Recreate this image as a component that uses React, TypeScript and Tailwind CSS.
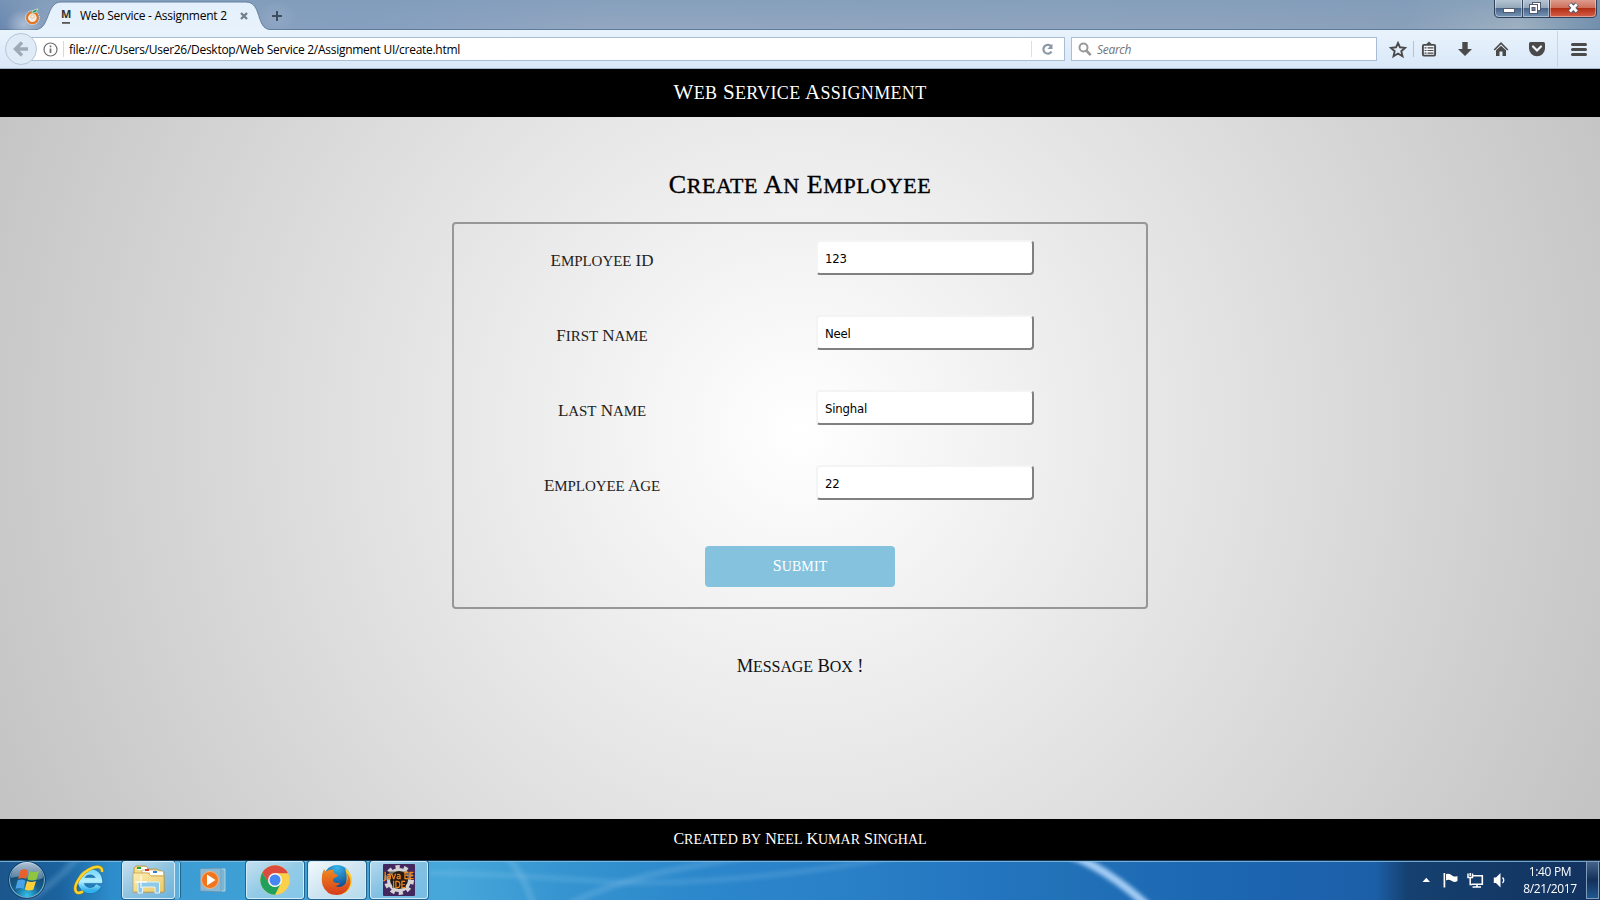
import React from "react";

function Caps({ text, className }: { text: string; className: string }) {
  const runs = text.match(/[a-z]+|[^a-z]+/g) ?? [];
  return (
    <span className={`whitespace-nowrap font-['Liberation_Serif',serif] ${className}`}>
      {runs.map((run, i) =>
        /[a-z]/.test(run) ? (
          <span key={i} className="text-[1.22em] leading-none [font-variant:small-caps]">{run}</span>
        ) : (
          <React.Fragment key={i}>{run}</React.Fragment>
        )
      )}
    </span>
  );
}

const UI = "font-['Open_Sans','Noto_Sans',sans-serif]";

function TabStrip() {
  return (
    <div className="relative flex h-[30px] shrink-0 items-stretch border-b border-[#5f7b9b] bg-[linear-gradient(90deg,#6a87b0_0,#8ea3bf_3%,#869fc0_22%,#93a7c1_38%,#8fa4be_75%,#8aa0ba_88%,#9fb1c1_95%,#708eac_100%)]">
      <div className="absolute inset-0 bg-gradient-to-b from-[#7d9bb9]/60 to-transparent" />
      <svg className="absolute left-0 top-0" width="300" height="30" viewBox="0 0 300 30">
        <defs>
          <linearGradient id="tab" x1="0" y1="0" x2="0" y2="1">
            <stop offset="0" stopColor="#e3f0fc" />
            <stop offset="1" stopColor="#e8f2fb" />
          </linearGradient>
          <radialGradient id="glow">
            <stop offset="0" stopColor="#dce4ee" stopOpacity=".5" />
            <stop offset="1" stopColor="#dce4ee" stopOpacity="0" />
          </radialGradient>
        </defs>
        <ellipse cx="24" cy="24" rx="18" ry="15" fill="url(#glow)" />
        <ellipse cx="277" cy="17" rx="20" ry="16" fill="url(#glow)" opacity=".25" />
        <path d="M36 29.5C50 29 46 2 61 2H246C262 2 256 29 270 29.5V31H36Z" fill="url(#tab)" />
        <path d="M36 29.5C50 29 46 2 61 2H246C262 2 256 29 270 29.5" fill="none" stroke="#65809f" />
        <circle cx="32.4" cy="17.6" r="7" fill="none" stroke="#f3f3ef" strokeDasharray="1 1" />
        <circle cx="32.4" cy="17.8" r="5.3" fill="#f0ede8" stroke="#ea7415" strokeWidth="2" />
        <circle cx="32.4" cy="16.6" r="1.8" fill="none" stroke="#f4b27a" strokeWidth=".8" />
        <path d="M32 13.5Q32 9.500 38 9Q37 13 32 13.500" fill="#1f9b50" stroke="#fff" strokeWidth=".6" />
        <path d="M62 22.900H70" stroke="#444" strokeWidth="1.600" />
        <path d="M241 13L247 19M247 13L241 19" stroke="#71818f" strokeWidth="2.400" />
        <path d="M277 11V21M272 16H282" stroke="#3f4e5e" strokeWidth="2" />
      </svg>
      <div className={`relative flex items-center pl-[61px] text-black ${UI}`}>
        <span className="w-[19px] pb-[2px] text-[11px] font-bold leading-none text-[#333]">M</span>
        <span className="whitespace-nowrap pt-[3px] text-[12px] tracking-[-0.26px]">Web Service - Assignment 2</span>
      </div>
      <svg className="absolute right-0 top-0" width="110" height="19" viewBox="1490 0 110 19">
        <defs>
          <linearGradient id="wb" x1="0" y1="0" x2="0" y2="1">
            <stop offset="0" stopColor="#b9c8d6" /><stop offset=".48" stopColor="#93a7bb" />
            <stop offset=".5" stopColor="#48668a" /><stop offset="1" stopColor="#7997b8" />
          </linearGradient>
          <linearGradient id="wc" x1="0" y1="0" x2="0" y2="1">
            <stop offset="0" stopColor="#dd9c8e" /><stop offset=".48" stopColor="#cd6d58" />
            <stop offset=".5" stopColor="#b32f14" /><stop offset="1" stopColor="#d5604a" />
          </linearGradient>
        </defs>
        <path d="M1494.500 -1V13Q1494.500 17.500 1499 17.500H1592Q1596.500 17.500 1596.500 13V-1Z" fill="url(#wb)" stroke="#2f4059" />
        <path d="M1550 0H1596V13Q1596 17 1592 17H1550Z" fill="url(#wc)" />
        <path d="M1495.500 0V13Q1495.500 16.500 1499 16.500H1521.500V0M1523.500 0V16.500H1548.500V0M1550.500 0V16.500H1592Q1595.500 16.500 1595.500 13V0" fill="none" stroke="#fff" strokeOpacity=".4" />
        <path d="M1522.500 0V17M1549.500 0V17" stroke="#34445c" />
        <rect x="1503.500" y="8.500" width="11" height="4" fill="#fff" stroke="#535a6b" />
        <rect x="1532.500" y="2.500" width="8" height="8" fill="#fff" stroke="#535a6b" />
        <rect x="1529.500" y="4.500" width="8" height="9" fill="#fff" stroke="#535a6b" />
        <rect x="1532" y="7.500" width="3" height="3" fill="#6f83a1" stroke="#535a6b" />
        <path d="M1569.800 4L1577 11.800M1577 4L1569.800 11.800" stroke="#535a6b" strokeWidth="4.800" />
        <path d="M1570 4.300L1576.800 11.500M1576.800 4.300L1570 11.500" stroke="#fff" strokeWidth="2.800" />
      </svg>
    </div>
  );
}

function NavBar() {
  return (
    <div className={`relative flex h-[39px] shrink-0 items-center border-b border-[#a3b5cb] bg-gradient-to-b from-[#e9f3fc] to-[#d9e7f8] ${UI}`}>
      <div className="ml-[30px] flex h-[24px] w-[1035px] items-center border border-[#a9bdd5] bg-white">
        <svg className="ml-[12px]" width="15" height="15" viewBox="0 0 15 15">
          <circle cx="7.500" cy="7.500" r="6.500" fill="none" stroke="#6e6e6e" strokeWidth="1.200" />
          <path d="M7.500 6.500V11M7.500 3.500V5.200" stroke="#6e6e6e" strokeWidth="1.700" />
        </svg>
        <div className="ml-[5px] h-[16px] w-px bg-[#d8d8d8]" />
        <span className="ml-[5px] whitespace-nowrap pt-[1px] text-[12px] tracking-[-0.28px] text-black">file:///C:/Users/User26/Desktop/Web Service 2/Assignment UI/create.html</span>
        <div className="ml-auto h-[16px] w-px bg-[#dcdfe3]" />
        <svg className="ml-[9px] mr-[10px]" width="13" height="13" viewBox="0 0 13 13">
          <path d="M10.300 3.600A4.400 4.400 0 1 0 10.600 8.500" fill="none" stroke="#8c9aa8" strokeWidth="2.200" />
          <path d="M11.500 .8V6H6.300Z" fill="#8c9aa8" />
        </svg>
      </div>
      <div className="ml-[6px] flex h-[24px] w-[306px] items-center border border-[#a9bdd5] bg-white pl-[6px]">
        <svg width="14" height="15" viewBox="0 0 14 15">
          <circle cx="5.500" cy="5.500" r="4" fill="none" stroke="#999" strokeWidth="2" />
          <path d="M8.300 8.500L12.700 13.200" stroke="#999" strokeWidth="2.600" />
        </svg>
        <span className="ml-[5px] pt-[1px] text-[12px] italic tracking-[-0.3px] text-[#70757a]">Search</span>
      </div>
      <svg className="absolute left-[4px] top-[2px]" width="34" height="34" viewBox="0 0 34 34">
        <circle cx="17" cy="17" r="15.500" fill="#dfebf7" stroke="#b5c6d8" />
        <path d="M24 17H12M18 10.500L11.500 17L18 23.500" fill="none" stroke="#a0aab4" strokeWidth="3.400" />
      </svg>
      <svg className="absolute left-[1384px] top-0" width="216" height="38" viewBox="1384 30 216 38">
        <path d="M1398 43L1400 47.300L1405 47.900L1401.300 51.200L1402.500 56.200L1398 53.500L1393.500 56.200L1394.700 51.200L1391 47.900L1396 47.300Z" fill="none" stroke="#4a4a4a" strokeWidth="1.900" />
        <path d="M1413.500 41V57" stroke="#b4c3d4" />
        <path d="M1557.500 31V67" stroke="#c6d6e8" />
        <rect x="1422.900" y="44.900" width="12.200" height="10.700" rx="1" fill="#f1f7fd" stroke="#4a4a4a" strokeWidth="1.900" />
        <path d="M1425 45L1427 43.500L1429 41.500L1431 43.500L1433 45Z" fill="#4a4a4a" />
        <path d="M1424.500 47.900H1426.500M1427.500 47.900H1433.500M1424.500 50.500H1426.500M1427.500 50.500H1433.500M1424.500 53.100H1426.500M1427.500 53.100H1433.500" stroke="#4a4a4a" strokeWidth="1.200" />
        <path d="M1462.300 42H1467.700V49H1472L1465 56L1458 49H1462.300Z" fill="#4a4a4a" />
        <path d="M1494.200 50L1501 43.200L1507.800 50" fill="none" stroke="#4a4a4a" strokeWidth="1.600" />
        <path d="M1496 50.300L1501 45.700L1506 50.300V56H1502.500V51.500H1499.500V56H1496Z" fill="#4a4a4a" />
        <path d="M1530.500 42H1543.500Q1545 42 1545 43.500V48.500A8 7.800 0 0 1 1529 48.500V43.500Q1529 42 1530.500 42Z" fill="#4a4a4a" />
        <path d="M1533 46.500L1537 50.500L1541 46.500" fill="none" stroke="#eef5fc" strokeWidth="2.200" strokeLinecap="round" />
        <path d="M1572.500 44.500H1585.500M1572.500 49.500H1585.500M1572.500 54.500H1585.500" stroke="#4a4a4a" strokeWidth="3" strokeLinecap="round" />
      </svg>
    </div>
  );
}

function Field({ label, value }: { label: string; value: string }) {
  return (
    <div className="flex h-[75px]">
      <div className="flex h-[42px] w-[296px] items-center justify-center">
        <Caps text={label} className="text-[17px] tracking-[-0.05px] text-[#222]" />
      </div>
      <input
        readOnly
        value={value}
        className="ml-[66px] h-[35px] w-[218px] rounded-[4px] border-2 border-b-[#808080] border-l-[#f4f4f4] border-r-[#808080] border-t-[#f4f4f4] bg-white px-[7px] pt-[2px] font-['DejaVu_Sans_Condensed','DejaVu_Sans',sans-serif] text-[13px] tracking-[-0.2px] text-black outline-none"
      />
    </div>
  );
}

function StartOrb() {
  return (
    <svg width="38" height="38" viewBox="0 0 38 38">
      <defs>
        <radialGradient id="orb" cx=".5" cy=".95" r=".9">
          <stop offset="0" stopColor="#35c3ee" /><stop offset=".4" stopColor="#14638f" /><stop offset="1" stopColor="#12395f" />
        </radialGradient>
        <linearGradient id="gloss" x1="0" y1="0" x2="0" y2="1">
          <stop offset="0" stopColor="#d5e0ec" stopOpacity=".85" /><stop offset="1" stopColor="#8fabc6" stopOpacity=".5" />
        </linearGradient>
      </defs>
      <circle cx="19" cy="19" r="17.500" fill="url(#orb)" stroke="#7fb3d3" strokeWidth="1.200" />
      <circle cx="19" cy="19" r="18.400" fill="none" stroke="#0d3557" strokeWidth=".8" />
      <path d="M3 17A16 16 0 0 1 35 17Q27 21 19 17Q11 14 3 17Z" fill="url(#gloss)" />
      <path d="M12.500 9.500Q16 7 20 9.500L18 18Q14 16 10 18Z" fill="#e8602c" />
      <path d="M21.500 10Q26 12 31 10L28.500 18.500Q24 20.500 19.500 18.500Z" fill="#8ec63f" />
      <path d="M9.500 19.500Q13.500 17.500 17.500 19.700L15.500 28Q11.500 26 7.500 28Z" fill="#4aa3e6" />
      <path d="M19 20Q23.500 22 28 20L25.500 28.500Q21 30.500 16.800 28.500Z" fill="#fbcf3a" />
    </svg>
  );
}

function IeIcon() {
  return (
    <svg width="34" height="34" viewBox="0 0 34 34">
      <defs>
        <linearGradient id="ie" x1="0" y1="0" x2="0" y2="1">
          <stop offset="0" stopColor="#7fdcfb" /><stop offset=".5" stopColor="#b5effe" /><stop offset="1" stopColor="#2fb0ec" />
        </linearGradient>
      </defs>
      <path d="M26.500 22.500A9.400 9.400 0 1 1 27.500 17.500H10.500" fill="none" stroke="#1c6fae" strokeWidth="7" />
      <path d="M26.500 22.500A9.400 9.400 0 1 1 27.500 17.500H10.500" fill="none" stroke="url(#ie)" strokeWidth="5.400" />
      <path d="M30 9C31 3 24 2 16 7C7 13 1 24 4 28.500C5 30.500 8 30 11 28.500" fill="none" stroke="#b98a12" strokeWidth="3.200" />
      <path d="M30 9C31 3 24 2 16 7C7 13 1 24 4 28.500C5 30.500 8 30 11 28.500" fill="none" stroke="#fbd62c" strokeWidth="2.200" />
    </svg>
  );
}

function ExplorerIcon() {
  return (
    <svg width="34" height="32" viewBox="0 0 34 32">
      <defs>
        <linearGradient id="fold" x1="0" y1="0" x2="1" y2="1">
          <stop offset="0" stopColor="#fbeeb4" /><stop offset="1" stopColor="#ecc964" />
        </linearGradient>
      </defs>
      <path d="M2 28V4L4 2H14L16 5H24L32 8V28Z" fill="#f3dc8c" stroke="#b58d3c" strokeWidth=".8" />
      <rect x="5" y="3" width="10" height="3" fill="#fff" /><rect x="5" y="3" width="4" height="2" fill="#25a52b" />
      <path d="M10 6H23V9H10Z" fill="#fff" stroke="#b58d3c" strokeWidth=".5" /><rect x="13" y="5" width="4" height="2" fill="#d13a25" />
      <path d="M18 7.500H31V11H18Z" fill="#fff" /><rect x="21" y="7" width="4" height="2" fill="#2b84d8" />
      <path d="M1 28V9H16L19 12H32V28Z" fill="url(#fold)" stroke="#c29c49" strokeWidth=".7" />
      <path d="M6 29V19Q6 18 7 18H26Q27.500 18 27.500 19V29H23V23H10.500V29Z" fill="#8fc9e8" stroke="#e1f3fc" />
      <path d="M9 12V24M3 18H15" stroke="#fff" strokeOpacity=".8" strokeWidth="1.400" />
    </svg>
  );
}

function MediaIcon() {
  return (
    <svg width="30" height="26" viewBox="0 0 30 26">
      <path d="M22 2H26V24H22Z" fill="#79b5d5" stroke="#c0dfee" strokeWidth=".8" />
      <path d="M1 1.500L22 1V25L1 24Z" fill="#8bb9d4" stroke="#5d93b3" strokeWidth=".8" />
      <circle cx="11" cy="13" r="8.500" fill="#f0751d" stroke="#f9b27a" />
      <path d="M8 7.500L16.500 13L8 18.500Z" fill="#fff" />
    </svg>
  );
}

function ChromeIcon() {
  return (
    <svg width="30" height="30" viewBox="0 0 30 30">
      <circle cx="15" cy="15" r="14.700" fill="#fbd14b" />
      <path d="M2.270 7.650A14.700 14.700 0 0 1 27.730 7.650L27.800 8.200H15V15L8.600 18.400Z" fill="#dd4b3e" />
      <path d="M2.270 7.650L8.900 18.500Q11 21.800 15 22L20.500 19L15 29.700A14.700 14.700 0 0 1 2.270 7.650Z" fill="#1fa15d" />
      <circle cx="15" cy="15" r="7" fill="#f4f6f8" />
      <circle cx="15" cy="15" r="5.500" fill="#4587f3" />
    </svg>
  );
}

function FirefoxIcon() {
  return (
    <svg width="32" height="32" viewBox="0 0 32 32">
      <defs>
        <radialGradient id="globe" cx=".5" cy=".1" r=".8">
          <stop offset="0" stopColor="#35b6ea" /><stop offset="1" stopColor="#0f3f87" />
        </radialGradient>
        <linearGradient id="fox" x1="0" y1="0" x2="0" y2="1">
          <stop offset="0" stopColor="#f08a1f" /><stop offset="1" stopColor="#d63c1c" />
        </linearGradient>
      </defs>
      <circle cx="16" cy="14.500" r="13.500" fill="url(#globe)" />
      <path d="M24 4Q32 10 31 18Q29 30 16 31L20 25Q29 20 24 4Z" fill="#f8cf35" />
      <path d="M3 5Q4 7 5 7.500Q8 5 11 6L13 5Q12 8 13.500 9.500L17 11Q16 13.500 12.500 14.500L12 17Q14 20 19 18.500Q18 21.500 14.500 22Q20 25 25 19Q28 14 25 8Q31 14 29 21Q26 30.500 16 31Q5 31 1.500 21Q-.5 12 3 5Z" fill="url(#fox)" />
    </svg>
  );
}

function JavaIcon() {
  return (
    <svg width="32" height="32" viewBox="0 0 32 32">
      <rect width="32" height="32" rx="1" fill="#43285f" />
      <circle cx="16" cy="16" r="13" fill="none" stroke="#d3d3d3" strokeWidth="4" strokeDasharray="4.200 4" />
      <circle cx="16" cy="16" r="10.500" fill="#25201f" stroke="#d3d3d3" strokeWidth="3" />
      <path d="M1 7.500H31V15.500H1ZM9 16H23V24H9Z" fill="#27160c" opacity=".55" />
      <g fill="#ff8f1c" stroke="#ff8f1c" strokeWidth=".3" fontSize="9.500" fontFamily="DejaVu Sans Condensed, DejaVu Sans, sans-serif" textAnchor="middle">
        <text x="16" y="15" textLength="30" lengthAdjust="spacingAndGlyphs">Java EE</text>
        <text x="16" y="23.500" textLength="13" lengthAdjust="spacingAndGlyphs">IDE</text>
      </g>
    </svg>
  );
}

function TaskButton({ className, children }: { className: string; children: React.ReactNode }) {
  return (
    <div className={`flex h-[38px] items-center justify-center rounded-[3px] border border-[#d3ecf9] shadow-[0_0_0_1px_#22648f] ${className}`}>
      {children}
    </div>
  );
}

function Taskbar() {
  return (
    <div className="relative flex h-[40px] shrink-0 items-start overflow-hidden border-t border-[#12344f] bg-[linear-gradient(90deg,#1c568c_0,#1b639f_60px,#2d8ccb_110px,#3b9dd3_180px,#47a7da_450px,#3695d0_560px,#2c87cb_700px,#2a80c7_850px,#2274be_1000px,#2272b8_1060px,#1c66b2_1220px,#1c5fa8_1375px,#15406f_1408px,#12325f_1600px)]">
      <svg className="absolute left-0 top-0" width="1600" height="39" viewBox="0 861 1600 39">
        <defs>
          <filter id="soft" x="-20%" y="-50%" width="140%" height="200%"><feGaussianBlur stdDeviation="2" /></filter>
        </defs>
        <g filter="url(#soft)" fill="none" stroke="#a9d6f5">
          <path d="M1062 852Q1105 866 1150 908" stroke="#a4cdf6" strokeWidth="8" />
          <path d="M20 905Q55 885 80 855" strokeWidth="7" opacity=".2" />
          <path d="M430 873C540 873 600 886 680 882S840 868 900 855" strokeWidth="5" opacity=".18" />
          <path d="M570 903C620 880 660 870 760 855" strokeWidth="6" opacity=".2" />
          <path d="M505 855Q525 875 533 905" strokeWidth="7" opacity=".2" />
        </g>
        <path d="M0 861.500H1600" stroke="#8cc0e2" strokeOpacity=".8" />
      </svg>
      <div className="relative flex w-full items-center">
        <div className="ml-[8px]"><StartOrb /></div>
        <div className="ml-[26px]"><IeIcon /></div>
        <div className="relative ml-[16px] flex">
          <TaskButton className="w-[53px] bg-gradient-to-br from-[#c5dfee] via-[#8fc3e0] to-[#6db4dc]"><ExplorerIcon /></TaskButton>
          <div className="h-[38px] w-[5px] rounded-r-[3px] border-r border-[#a9d6ee] bg-[#5fb0dc] shadow-[1px_0_0_#22648f]" />
        </div>
        <div className="ml-[19px]"><MediaIcon /></div>
        <TaskButton className="ml-[17px] w-[58px] bg-gradient-to-br from-[#c3dfef] via-[#93cbe7] to-[#84c6e8]"><ChromeIcon /></TaskButton>
        <TaskButton className="ml-[4px] w-[58px] bg-gradient-to-br from-[#f3f9fc] via-[#cfe5f1] to-[#b5daee]"><FirefoxIcon /></TaskButton>
        <TaskButton className="ml-[4px] w-[58px] bg-gradient-to-br from-[#b3d9ee] via-[#82c0e2] to-[#76bde4]"><JavaIcon /></TaskButton>
        <svg className="ml-auto" width="88" height="20" viewBox="1421 871 88 20">
          <path d="M1422.500 883L1426.300 878.800L1430 883Z" fill="#fff" />
          <g stroke="#0f2f52" strokeWidth="1" paintOrder="stroke" fill="#fff">
            <path d="M1443.500 874H1445.300V888.500H1443.500Z" />
            <path d="M1446 875Q1449 874 1451.500 876Q1454 878.500 1457.500 877V882Q1454 884 1451 881.500Q1448.500 880 1446 881.500Z" />
          </g>
          <path d="M1473 876.700H1482.300V885.300H1472M1477 885V888M1472.500 888H1481" fill="none" stroke="#fff" strokeWidth="1.600" />
          <path d="M1468 874.500V878.500H1472.500V874.500M1470.200 878V885.500H1472M1470.200 874V877" fill="none" stroke="#fff" strokeWidth="1.500" />
          <path d="M1493.800 878.500H1496L1500.500 874V888.500L1496 884H1493.800Z" fill="#fff" />
          <path d="M1502.500 878.500Q1505 881.200 1502.500 884" fill="none" stroke="#fff" strokeWidth="1.300" />
        </svg>
        <div className={`ml-[10px] flex w-[62px] flex-col items-center text-[12px] leading-[17px] tracking-[-0.35px] text-white ${UI}`}>
          <span>1:40 PM</span>
          <span>8/21/2017</span>
        </div>
        <div className="ml-[5px] mr-[1px] h-[38px] w-[13px] border border-[#7f9cba] bg-gradient-to-b from-[#45648a] via-[#14305a] to-[#1f5790]" />
      </div>
    </div>
  );
}

export default function App() {
  return (
    <div className="flex h-[900px] w-[1600px] flex-col overflow-hidden">
      <TabStrip />
      <NavBar />
      <header className="flex h-[48px] shrink-0 items-center justify-center bg-black">
        <Caps text="Web Service Assignment" className="text-[21px] tracking-[0.34px] text-white" />
      </header>
      <main className="flex h-[702px] shrink-0 flex-col items-center bg-[radial-gradient(circle_889px_at_800px_313px,#ffffff,#c3c3c3)]">
        <h1 className="mt-[47px] flex h-[40px] items-center">
          <Caps text="Create An Employee" className="text-[26px] tracking-[0.6px] text-black [-webkit-text-stroke:0.4px_black]" />
        </h1>
        <form className="mt-[18px] flex h-[387px] w-[696px] flex-col rounded-[4px] border-2 border-[#979797] pt-[16px]">
          <Field label="Employee ID" value="123" />
          <Field label="First Name" value="Neel" />
          <Field label="Last Name" value="Singhal" />
          <Field label="Employee Age" value="22" />
          <button type="button" className="mt-[6px] flex h-[41px] w-[190px] items-center justify-center self-center rounded-[4px] bg-[#84c2dd] pb-[2px]">
            <Caps text="Submit" className="text-[16px] tracking-[0.1px] text-white" />
          </button>
        </form>
        <div className="mt-[38px] flex h-[40px] items-center">
          <Caps text="Message Box !" className="text-[18.5px] tracking-[-0.1px] text-[#111]" />
        </div>
      </main>
      <footer className="flex h-[41px] shrink-0 items-center justify-center bg-black pb-[2px]">
        <Caps text="Created by Neel Kumar Singhal" className="text-[16px] text-white" />
      </footer>
      <Taskbar />
    </div>
  );
}
